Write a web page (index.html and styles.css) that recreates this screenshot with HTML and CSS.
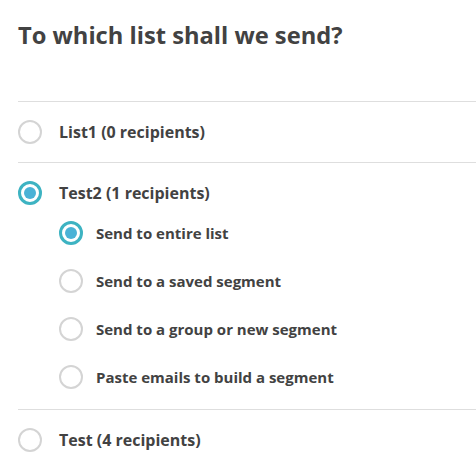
FILE: index.html
```html
<!DOCTYPE html>
<html>
<head>
<meta charset="utf-8">
<link rel="stylesheet" href="styles.css">
</head>
<body>
<div class="page">
  <h1 class="title">To which list shall we send?</h1>
  <div class="lists">
    <div class="list-item">
      <label class="row main">
        <span class="radio"></span>
        <span class="label">List1 (0 recipients)</span>
      </label>
    </div>
    <div class="list-item">
      <label class="row main">
        <span class="radio checked"></span>
        <span class="label">Test2 (1 recipients)</span>
      </label>
      <div class="sub">
        <label class="row subrow"><span class="radio checked"></span><span class="label small">Send to entire list</span></label>
        <label class="row subrow"><span class="radio"></span><span class="label small">Send to a saved segment</span></label>
        <label class="row subrow"><span class="radio"></span><span class="label small">Send to a group or new segment</span></label>
        <label class="row subrow"><span class="radio"></span><span class="label small">Paste emails to build a segment</span></label>
      </div>
    </div>
    <div class="list-item">
      <label class="row main">
        <span class="radio"></span>
        <span class="label">Test (4 recipients)</span>
      </label>
    </div>
  </div>
</div>
</body>
</html>
```
FILE: styles.css
```css
html, body { margin: 0; padding: 0; background: #fff; }
body { font-family: "Open Sans", "DejaVu Sans", sans-serif; color: #424242; overflow: hidden; }
.page { padding: 0 0 0 18px; }
.title { margin: 0; padding-top: 19px; font-size: 23.7px; font-weight: 700; line-height: 32px; color: #424242; height: 82px; }
.list-item { border-top: 1px solid #dedede; }
.row { display: flex; align-items: center; }
.main { height: 60px; gap: 17px; }
.radio { box-sizing: border-box; width: 24px; height: 24px; border-radius: 50%; border: 2px solid #d4d4d4; background: #fff; flex: none; position: relative; }
.radio.checked { border: 3px solid #3db3c2; }
.radio.checked::after { content: ""; position: absolute; left: 3px; top: 3px; width: 12px; height: 12px; border-radius: 50%; background: #4ab2d6; }
.label { font-size: 16px; font-weight: 700; color: #424242; }
.label.small { font-size: 15px; }
.sub { padding: 0 0 8px 41px; margin-top: -14px; }
.subrow { height: 48px; gap: 13px; }
.list-item:last-child .main { height: 59px; }
```
